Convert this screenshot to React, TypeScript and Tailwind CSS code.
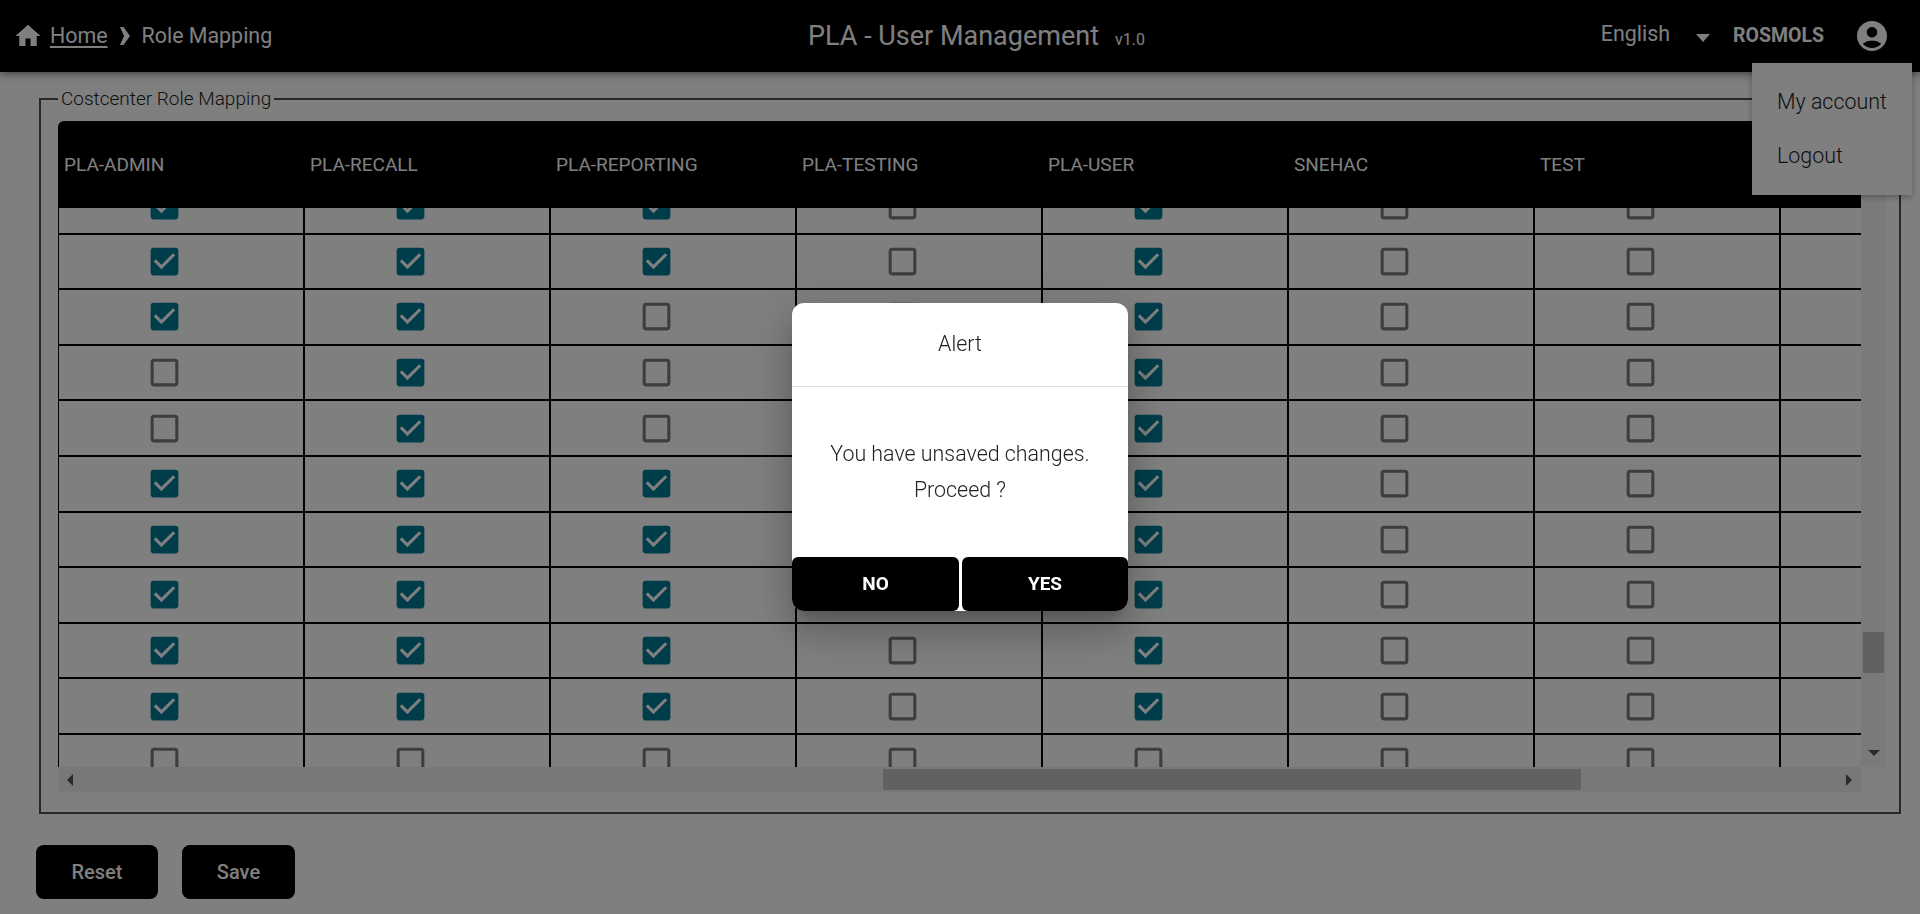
import { MdAccountCircle, MdCheckBox, MdCheckBoxOutlineBlank, MdHome } from "react-icons/md";

const roles = ["PLA-ADMIN", "PLA-RECALL", "PLA-REPORTING", "PLA-TESTING", "PLA-USER", "SNEHAC", "TEST", ""];

// 1 = checked, 0 = not checked; the first and last rows are cut off by the scroll area
const rows = [
  [1, 1, 1, 0, 1, 0, 0],
  [1, 1, 1, 0, 1, 0, 0],
  [1, 1, 0, 0, 1, 0, 0],
  [0, 1, 0, 0, 1, 0, 0],
  [0, 1, 0, 0, 1, 0, 0],
  [1, 1, 1, 0, 1, 0, 0],
  [1, 1, 1, 0, 1, 0, 0],
  [1, 1, 1, 0, 1, 0, 0],
  [1, 1, 1, 0, 1, 0, 0],
  [1, 1, 1, 0, 1, 0, 0],
  [0, 0, 0, 0, 0, 0, 0],
];

function Arrow({ dir }: { dir: "left" | "right" | "down" }) {
  const points = dir === "left" ? "6,0 6,12 0,6" : dir === "right" ? "0,0 0,12 6,6" : "0,0 12,0 6,6";
  return (
    <svg width={dir === "down" ? 12 : 6} height={dir === "down" ? 6 : 12} className="text-[#555]">
      <polygon points={points} fill="currentColor" />
    </svg>
  );
}

function Header() {
  return (
    <header className="relative z-10 flex h-[72px] items-center bg-black text-white shadow-[0_2px_8px_rgba(0,0,0,0.5)]">
      <div className="flex w-[808px] items-center pl-[13px] text-[21.4px]">
        <MdHome size={30} />
        <a className="ml-[7px] underline underline-offset-[3px]">Home</a>
        <svg width="10" height="18" viewBox="0 0 10 18" className="mr-[12px] ml-[12px]">
          <path d="M0 0h3.5L10 9l-6.5 9H0l4-9z" fill="currentColor" />
        </svg>
        <span>Role Mapping</span>
      </div>
      <div className="flex items-baseline">
        <span className="text-[27px]">PLA - User Management</span>
        <span className="ml-[16px] text-[16px]">v1.0</span>
      </div>
      <div className="ml-auto flex items-center pr-[30px]">
        <span className="mb-[4px] text-[21.4px]">English</span>
        <svg width="14" height="8" viewBox="0 0 14 8" className="mt-[4px] ml-[26px]">
          <polygon points="0,0 14,0 7,8" fill="currentColor" />
        </svg>
        <span className="ml-[23px] text-[19.5px] font-bold">ROSMOLS</span>
        <MdAccountCircle size={36} className="ml-[30px]" />
      </div>
    </header>
  );
}

function RoleTable() {
  return (
    <div className="flex h-[671px] w-[1828px] flex-col">
      <div className="flex min-h-0 flex-1">
        <div className="flex w-[1803px] flex-col">
          <div className="grid h-[87px] shrink-0 grid-cols-[repeat(8,246px)] items-center overflow-hidden rounded-tl-[6px] bg-black pt-[2px] text-[19px] text-white">
            {roles.map((role) => (
              <div key={role || "blank"} className="pl-[6px]">
                {role}
              </div>
            ))}
          </div>
          <div className="min-h-0 flex-1 overflow-hidden">
            <div className="-mt-[29px] -ml-px">
              {rows.map((row, i) => (
                <div key={i} className="grid h-[55.6px] grid-cols-[repeat(8,246px)]">
                  {[...row, -1].map((value, j) => (
                    <div key={j} className="flex items-center border-b-2 border-l-2 border-black pl-[87px]">
                      {value === 1 && <MdCheckBox size={37} className="text-[#007a96]" />}
                      {value === 0 && <MdCheckBoxOutlineBlank size={37} className="text-[#7a7a7a]" />}
                    </div>
                  ))}
                </div>
              ))}
            </div>
          </div>
        </div>
        <div className="flex w-[25px] flex-col items-center bg-[#f5f5f5]">
          <div className="mt-[511px] h-[41px] w-[21px] bg-[#c2c2c2]" />
          <div className="mt-auto mb-[11px] flex">
            <Arrow dir="down" />
          </div>
        </div>
      </div>
      <div className="flex h-[25px] shrink-0">
        <div className="flex w-[1803px] items-center bg-[#f1f1f1] pl-[9px] pr-[9px]">
          <Arrow dir="left" />
          <div className="ml-[810px] h-[21px] w-[698px] bg-[#c2c2c2]" />
          <div className="ml-auto flex">
            <Arrow dir="right" />
          </div>
        </div>
        <div className="w-[25px] bg-white" />
      </div>
    </div>
  );
}

function AlertDialog() {
  return (
    <div className="fixed inset-0 z-30 flex items-center justify-center bg-black/50">
      <div className="flex h-[308px] w-[336px] flex-col overflow-hidden rounded-[12px] bg-white text-[#222] shadow-[0_11px_15px_-7px_rgba(0,0,0,0.2),0_24px_38px_3px_rgba(0,0,0,0.14),0_9px_46px_8px_rgba(0,0,0,0.12)]">
        <div className="flex h-[84px] shrink-0 items-center justify-center border-b border-[#e0e0e0] text-[21.4px] font-light">Alert</div>
        <div className="flex flex-1 flex-col items-center justify-center text-[21.4px] leading-[36px] font-light">
          <p>You have unsaved changes.</p>
          <p>Proceed ?</p>
        </div>
        <div className="flex h-[54px] shrink-0 justify-between">
          <button className="w-[167px] rounded-[6px] bg-black text-[19px] font-bold text-white">NO</button>
          <button className="w-[166px] rounded-[6px] bg-black text-[19px] font-bold text-white">YES</button>
        </div>
      </div>
    </div>
  );
}

export default function App() {
  return (
    <div className="relative h-[914px] overflow-hidden bg-white font-['Roboto',sans-serif] text-[#222]">
      <Header />

      <div className="absolute top-[63px] right-[8px] z-20 flex h-[132px] w-[160px] flex-col justify-center gap-[30px] bg-white pl-[25px] text-[21.4px] leading-[24px] font-light shadow-[0_2px_6px_rgba(0,0,0,0.3)]">
        <div>My account</div>
        <div>Logout</div>
      </div>

      <main className="pr-[19px] pl-[39px] pt-[15px]">
        <fieldset className="border-2 border-[#505050] pr-[13px] pb-[20px] pl-[17px]">
          <legend className="px-[3px] text-[19px] leading-[24px] font-light">Costcenter Role Mapping</legend>
          <div className="mt-[10px]">
            <RoleTable />
          </div>
        </fieldset>
        <div className="mt-[31px] flex gap-[24px]">
          <button className="-ml-[3px] h-[54px] w-[122px] rounded-[8px] bg-black text-[20px] font-medium text-white">Reset</button>
          <button className="h-[54px] w-[113px] rounded-[8px] bg-black text-[20px] font-medium text-white">Save</button>
        </div>
      </main>

      <AlertDialog />
    </div>
  );
}
